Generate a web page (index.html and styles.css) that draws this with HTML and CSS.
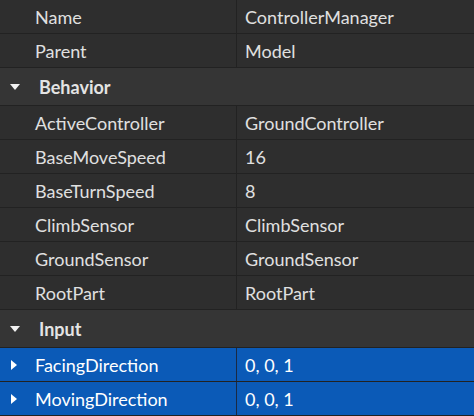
FILE: index.html
```html
<!DOCTYPE html>
<html>
<head>
<meta charset="utf-8">
<link rel="stylesheet" href="styles.css">
</head>
<body>
<div class="props">
  <div class="row"><div class="name">Name</div><div class="value">ControllerManager</div></div>
  <div class="row"><div class="name">Parent</div><div class="value">Model</div></div>
  <div class="cat"><span class="tri-down"></span><span class="cat-label">Behavior</span></div>
  <div class="row"><div class="name">ActiveController</div><div class="value">GroundController</div></div>
  <div class="row"><div class="name">BaseMoveSpeed</div><div class="value">16</div></div>
  <div class="row"><div class="name">BaseTurnSpeed</div><div class="value">8</div></div>
  <div class="row"><div class="name">ClimbSensor</div><div class="value">ClimbSensor</div></div>
  <div class="row"><div class="name">GroundSensor</div><div class="value">GroundSensor</div></div>
  <div class="row"><div class="name">RootPart</div><div class="value">RootPart</div></div>
  <div class="cat"><span class="tri-down"></span><span class="cat-label">Input</span></div>
  <div class="row selected"><div class="name"><span class="tri-right"></span>FacingDirection</div><div class="value">0, 0, 1</div></div>
  <div class="row selected"><div class="name"><span class="tri-right"></span>MovingDirection</div><div class="value">0, 0, 1</div></div>
</div>
</body>
</html>
```
FILE: styles.css
```css
html, body {
  margin: 0;
  padding: 0;
  background: #2e2e2e;
}
body {
  font-family: Lato, "Open Sans", sans-serif;
  font-size: 18px;
  color: #e0e0e0;
}
.props {
  display: flex;
  flex-direction: column;
  width: 474px;
}
.row {
  display: grid;
  grid-template-columns: 237px 1fr;
  height: 33px;
  border-bottom: 1px solid #222222;
  background: #2e2e2e;
}
.name {
  position: relative;
  display: flex;
  align-items: center;
  padding-left: 35px;
  border-right: 1px solid #222222;
}
.value {
  display: flex;
  align-items: center;
  padding-left: 8px;
}
.cat {
  display: flex;
  align-items: center;
  height: 37px;
  border-bottom: 1px solid #222222;
  background: #353535;
  font-weight: bold;
  color: #e4e4e4;
}
.tri-down {
  width: 0;
  height: 0;
  margin-left: 10px;
  margin-right: 19px;
  border-left: 5px solid transparent;
  border-right: 5px solid transparent;
  border-top: 6px solid #f2f2f2;
}
.selected {
  background: #0b5ab7;
  color: #ffffff;
}
.selected .name {
  border-right-color: #1a2a44;
}
.tri-right {
  position: absolute;
  left: 11px;
  top: 50%;
  margin-top: -5px;
  width: 0;
  height: 0;
  border-top: 5px solid transparent;
  border-bottom: 5px solid transparent;
  border-left: 6px solid #ffffff;
}
```
